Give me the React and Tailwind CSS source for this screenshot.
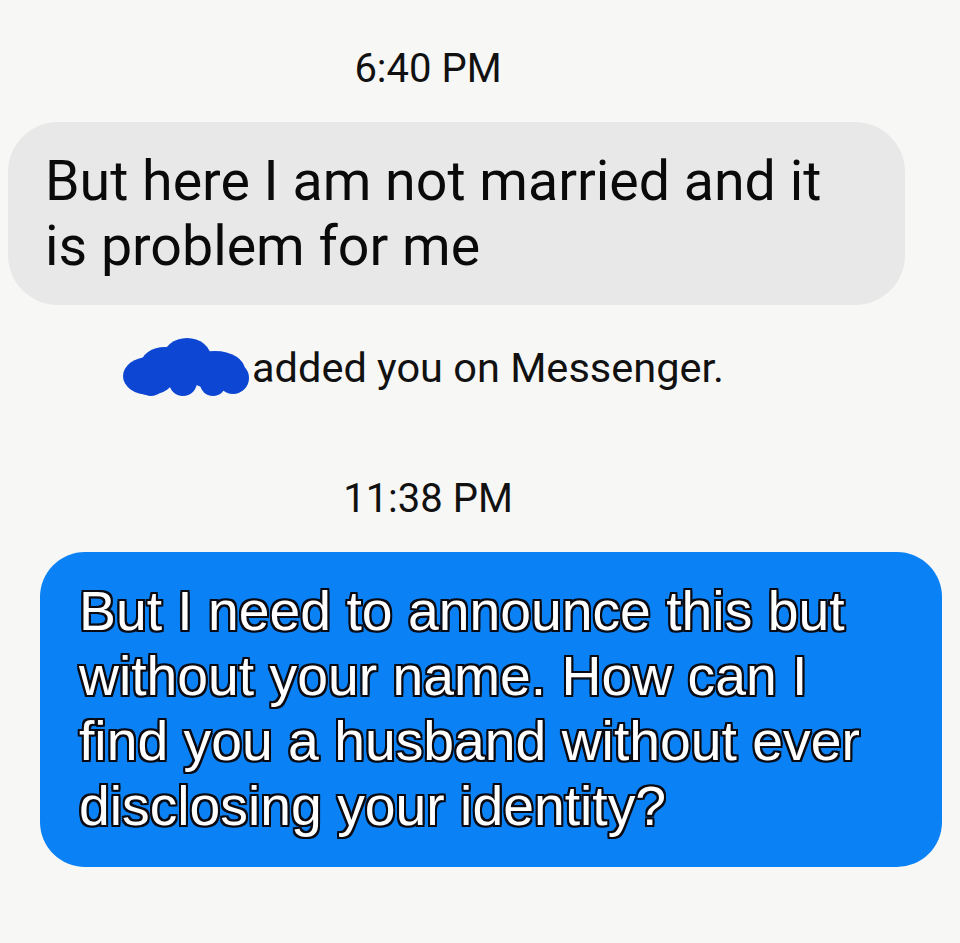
import React from "react";

const outline =
  "[text-shadow:-2px_-2px_0_#0a0a12,2px_-2px_0_#0a0a12,-2px_2px_0_#0a0a12,2px_2px_0_#0a0a12,0_-2px_0_#0a0a12,0_2px_0_#0a0a12,-2px_0_0_#0a0a12,2px_0_0_#0a0a12]";

function Scribble() {
  return (
    <svg width="127" height="59" viewBox="0 0 127 59" className="shrink-0">
      <g fill="#0d46d2">
        <ellipse cx="26" cy="38" rx="26" ry="19" />
        <ellipse cx="42" cy="26" rx="24" ry="17" />
        <ellipse cx="64" cy="20" rx="24" ry="20" />
        <ellipse cx="92" cy="32" rx="30" ry="19" />
        <circle cx="110" cy="40" r="16" />
        <circle cx="28" cy="45" r="13" />
        <circle cx="60" cy="44" r="14" />
        <circle cx="90" cy="45" r="13" />
      </g>
    </svg>
  );
}

function Stamp({ children, className = "" }) {
  return (
    <div className={`pr-[104px] text-center text-[40px] leading-[48px] text-[#111] ${className}`}>
      {children}
    </div>
  );
}

export default function App() {
  return (
    <div className="min-h-[943px] w-[960px] bg-[#f7f7f6] pt-[45px] font-['Roboto',sans-serif]">
      <Stamp>6:40 PM</Stamp>

      <div className="mt-[29px] ml-[8px] w-[897px] rounded-[50px] bg-[#e8e8e8] pl-[37px] pt-[27px] pb-[26px] text-[55.5px] leading-[65px] text-[#0a0a0a]">
        But here I am not married and it
        <br />
        is problem for me
      </div>

      <div className="mt-[33px] ml-[123px] flex h-[59px] items-center gap-[2px]">
        <Scribble />
        <span className="text-[41.5px] leading-[48px] text-[#111]">
          added you on Messenger.
        </span>
      </div>

      <Stamp className="mt-[78px]">11:38 PM</Stamp>

      <div
        className={`mt-[29px] ml-[40px] w-[902px] rounded-[45px] bg-[#0a82f5] pl-[39px] pt-[27px] pb-[28px] font-['Liberation_Sans',Arial,sans-serif] text-[55.3px] leading-[65px] text-white ${outline}`}
      >
        But I need to announce this but
        <br />
        without your name. How can I
        <br />
        find you a husband without ever
        <br />
        disclosing your identity?
      </div>
    </div>
  );
}
